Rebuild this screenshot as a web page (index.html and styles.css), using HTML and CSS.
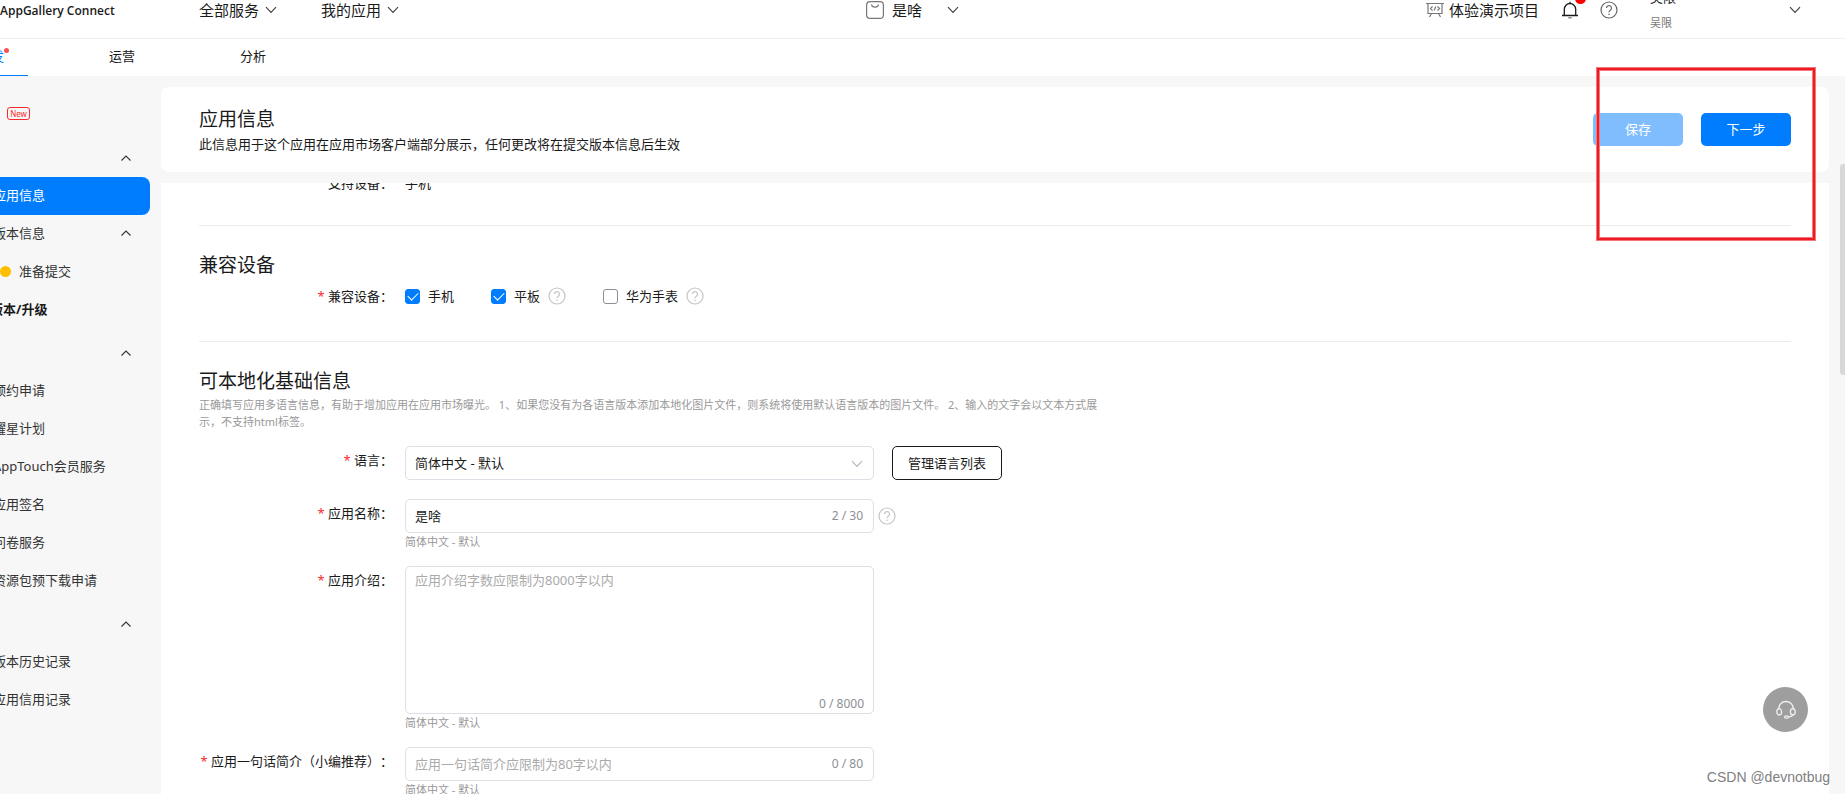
FILE: index.html
```html
<!DOCTYPE html>
<html lang="zh-CN">
<head>
<meta charset="utf-8">
<title>AppGallery Connect</title>
<link rel="stylesheet" href="styles.css">
</head>
<body>
<svg class="defs" aria-hidden="true">
  <symbol id="down" viewBox="0 0 12 8"><path d="M1 1.2 6 6.4 11 1.2" fill="none" stroke="currentColor" stroke-width="1.2"/></symbol>
  <symbol id="up" viewBox="0 0 12 8"><path d="M1.5 6.5 6 2 10.500 6.500" fill="none" stroke="currentColor" stroke-width="1.100"/></symbol>
  <symbol id="help" viewBox="0 0 18 18"><g fill="none" stroke="currentColor" stroke-width="1.2"><circle cx="9" cy="9" r="8"/><path d="M6.500 7.100a2.500 2.500 0 1 1 4.100 1.900c-1 .8-1.600 1.200-1.600 2.300"/></g><circle cx="9" cy="13.200" r=".8" fill="currentColor"/></symbol>
</svg>

<header class="topbar">
  <a class="brand" href="#">AppGallery Connect</a>
  <nav class="topnav">
    <button type="button" class="menu">全部服务<svg class="chev"><use href="#down"/></svg></button>
    <button type="button" class="menu">我的应用<svg class="chev"><use href="#down"/></svg></button>
  </nav>
  <button type="button" class="menu app-menu">
    <svg class="app-icon" viewBox="0 0 18 18" fill="none" stroke="#777" stroke-width="1.200"><rect x=".6" y=".6" width="16.800" height="16.800" rx="3.500"/><path d="M5.500 3.500c.4 3.600 6.600 3.600 7 0"/></svg>
    <span>是啥</span><svg class="chev"><use href="#down"/></svg>
  </button>
  <div class="tools">
    <a class="demo" href="#">
      <svg viewBox="0 0 18 16" fill="none" stroke="#777" stroke-width="1.200"><path d="M0 1.500h18M2 1.500v10h14v-10M5.500 11.500 3.500 15M12.500 11.500l2 3.500M6.500 4.500 4.500 6.500l2 2M11.500 4.500l2 2-2 2M9.800 4.500 8.200 8.500"/></svg>体验演示项目</a>
    <button type="button" class="bell" aria-label="通知">
      <svg viewBox="0 0 18 18" fill="none" stroke="#1a1a1a" stroke-width="1.300"><path d="M1 14.500h16M3.300 14.500V8.200a5.700 5.700 0 0 1 11.400 0v6.300M9 2.500V.8"/><path d="M7.300 16.800h3.400" stroke="#777"/></svg>
      <span class="bell-badge"></span>
    </button>
    <button type="button" class="help dark" aria-label="帮助"><svg><use href="#help"/></svg></button>
    <button type="button" class="user">
      <span class="user-names"><span class="user-name">吴限</span><span class="user-sub">吴限</span></span>
      <svg class="chev"><use href="#down"/></svg>
    </button>
  </div>
</header>

<nav class="tabs">
  <a class="tab current" href="#"><span class="tab-text">开发<i class="tab-dot"></i></span></a>
  <a class="tab" href="#">运营</a>
  <a class="tab" href="#">分析</a>
</nav>

<div class="body">
  <aside class="side">
    <div class="side-top"><span class="new">New</span></div>
    <button type="button" class="group" aria-label="应用上架"><svg class="chev-up"><use href="#up"/></svg></button>
    <a class="item active" href="#">应用信息</a>
    <a class="item" href="#">版本信息<svg class="chev-up"><use href="#up"/></svg></a>
    <a class="item sub" href="#"><i class="dot"></i>准备提交</a>
    <a class="item strong" href="#">新版本/升级</a>
    <button type="button" class="group" aria-label="应用服务"><svg class="chev-up"><use href="#up"/></svg></button>
    <a class="item" href="#">预约申请</a>
    <a class="item" href="#">耀星计划</a>
    <a class="item" href="#">AppTouch会员服务</a>
    <a class="item" href="#">应用签名</a>
    <a class="item" href="#">问卷服务</a>
    <a class="item" href="#">资源包预下载申请</a>
    <button type="button" class="group" aria-label="记录"><svg class="chev-up"><use href="#up"/></svg></button>
    <a class="item" href="#">版本历史记录</a>
    <a class="item" href="#">应用信用记录</a>
  </aside>

  <main class="main">
    <section class="panel page-head">
      <div>
        <h1>应用信息</h1>
        <p class="lead">此信息用于这个应用在应用市场客户端部分展示，任何更改将在提交版本信息后生效</p>
      </div>
      <div class="actions">
        <button type="button" class="btn" disabled>保存</button>
        <button type="button" class="btn">下一步</button>
      </div>
    </section>

    <form class="panel form">
      <div class="row clipped"><span class="label">支持设备：</span><span>手机</span></div>

      <section class="block">
        <h2>兼容设备</h2>
        <div class="row devices">
          <span class="label required">兼容设备：</span>
          <div class="options">
            <label class="option"><input type="checkbox" checked>手机</label>
            <div class="option"><label class="option"><input type="checkbox" checked>平板</label><span class="help"><svg><use href="#help"/></svg></span></div>
            <div class="option"><label class="option"><input type="checkbox">华为手表</label><span class="help"><svg><use href="#help"/></svg></span></div>
          </div>
        </div>
      </section>

      <section class="block">
        <h2>可本地化基础信息</h2>
        <p class="note">正确填写应用多语言信息，有助于增加应用在应用市场曝光。 1、如果您没有为各语言版本添加本地化图片文件，则系统将使用默认语言版本的图片文件。 2、输入的文字会以文本方式展示，不支持html标签。</p>
        <div class="row lang">
          <label class="label required" for="lang">语言：</label>
          <div class="line">
            <div class="field">
              <select id="lang" class="input"><option>简体中文 - 默认</option></select>
              <svg class="chev select-chev"><use href="#down"/></svg>
            </div>
            <button type="button" class="outline">管理语言列表</button>
          </div>
        </div>
        <div class="row">
          <label class="label required" for="name">应用名称：</label>
          <div>
            <div class="line near">
              <div class="field"><input id="name" class="input" type="text" value="是啥"><span class="count">2 / 30</span></div>
              <span class="help"><svg><use href="#help"/></svg></span>
            </div>
            <p class="tip">简体中文 - 默认</p>
          </div>
        </div>
        <div class="row">
          <label class="label required" for="intro">应用介绍：</label>
          <div>
            <div class="field"><textarea id="intro" class="input" placeholder="应用介绍字数应限制为8000字以内"></textarea><span class="count low">0 / 8000</span></div>
            <p class="tip">简体中文 - 默认</p>
          </div>
        </div>
        <div class="row">
          <label class="label required" for="brief">应用一句话简介（小编推荐）：</label>
          <div>
            <div class="field"><input id="brief" class="input" type="text" placeholder="应用一句话简介应限制为80字以内"><span class="count">0 / 80</span></div>
            <p class="tip">简体中文 - 默认</p>
          </div>
        </div>
      </section>
    </form>
  </main>
</div>

<div class="thumb"></div>
<div class="marker"></div>
<button type="button" class="service" aria-label="在线客服">
  <svg viewBox="0 0 20 20" fill="none" stroke="#eee" stroke-width="1.300"><path d="M2.500 9.500C2.500-1.200 17.500-1.200 17.500 9.500M17.500 14c-.6 2-2.300 2.700-5 2.800"/><ellipse cx="3.200" cy="11.800" rx="2.400" ry="3.200"/><ellipse cx="16.800" cy="11.800" rx="2.400" ry="3.200"/><ellipse cx="10.500" cy="17" rx="2" ry="1.200"/></svg>
</button>
<span class="credit">CSDN @devnotbug</span>
</body>
</html>
```

FILE: styles.css
```css
* { box-sizing: border-box; }

body {
  margin: 0;
  height: 100vh;
  overflow: hidden;
  display: flex;
  flex-direction: column;
  position: relative;
  background: #f7f7f7;
  color: #1a1a1a;
  font: 13px/20px "Noto Sans", "Noto Sans CJK SC", sans-serif;
  text-spacing-trim: space-all;
}

a { color: inherit; text-decoration: none; }
h1, h2, p { margin: 0; font-weight: 400; }
svg { display: block; flex: none; }
button {
  padding: 0;
  border: 0;
  background: none;
  color: inherit;
  font: inherit;
  cursor: pointer;
}

.defs { position: absolute; width: 0; height: 0; }
.chev { width: 12px; height: 8px; color: #444; }
.chev-up { width: 12px; height: 8px; color: #333; }
.help { display: block; color: #c4c4c4; }
.help svg { width: 18px; height: 18px; }
.help.dark { color: #666; }

/* top bar */
.topbar {
  flex: none;
  display: flex;
  align-items: center;
  height: 57px;
  margin-top: -18px;
  padding-right: 44px;
  background: #fff;
  border-bottom: 1px solid #f0f0f0;
  font-size: 15px;
}
.brand { width: 199px; padding: 2px 0 0; font-family: "Open Sans", sans-serif; font-size: 12px; font-weight: 600; }
.topnav { display: flex; gap: 44px; }
.menu { display: flex; align-items: center; gap: 6px; }
.app-menu { margin: 0 auto; gap: 8px; }
.app-menu .chev { margin-left: 17px; }
.app-icon { width: 18px; height: 18px; }
.tools { display: flex; align-items: center; }
.demo { display: flex; align-items: center; gap: 5px; margin-right: 22px; }
.demo svg { width: 18px; height: 16px; }
.bell { position: relative; margin-right: 21px; }
.bell svg { width: 18px; height: 18px; }
.bell-badge {
  position: absolute;
  top: -8px;
  right: -7px;
  width: 11px;
  height: 11px;
  border-radius: 50%;
  background: #f00;
}
.user { display: flex; align-items: center; gap: 113px; margin-left: 32px; text-align: left; }
.user-names { display: flex; flex-direction: column; line-height: 25px; }
.user-name { font-size: 13px; }
.user-sub { font-size: 11px; color: #777; }

/* tabs */
.tabs {
  flex: none;
  display: flex;
  gap: 57px;
  height: 37px;
  margin-left: -46px;
  background: #fff;
}
.tab { width: 74px; padding-top: 7px; text-align: center; }
.tab.current { color: #007dff; border-bottom: 1px solid #007dff; }
.tab-text { position: relative; }
.tab-dot {
  position: absolute;
  top: 1px;
  right: -5px;
  width: 5px;
  height: 5px;
  border-radius: 50%;
  background: #fa5151;
}

/* layout */
.body { flex: 1; min-height: 0; display: flex; gap: 11px; padding-right: 16px; }
.main { flex: 1; min-width: 0; display: flex; flex-direction: column; gap: 11px; padding-top: 11px; }

/* side menu */
.side { flex: none; width: 174px; margin-left: -24px; color: #333; }
.side-top { height: 63px; padding: 31px 0 0 31px; }
.new {
  display: block;
  width: 23px;
  height: 13px;
  border: 1px solid #fa2a2d;
  border-radius: 3px;
  color: #fa2a2d;
  font-size: 8px;
  line-height: 11px;
  text-align: center;
}
.group, .item { display: flex; align-items: center; width: 100%; height: 38px; padding: 0 18px 2px 17px; }
.group { justify-content: flex-end; margin-top: 5px; padding-bottom: 0; }
.side-top + .group { margin-top: 0; }
.item .chev-up { margin-left: auto; }
.item.active { background: #007dff; color: #fff; border-radius: 8px; }
.item.sub { gap: 8px; padding-left: 24px; }
.item.strong { padding-left: 1px; font-weight: 700; color: #1a1a1a; }
.dot { width: 11px; height: 11px; border-radius: 50%; background: #ffbf00; }

/* panels */
.panel { background: #fff; padding: 0 38px; }
.page-head {
  flex: none;
  display: flex;
  align-items: center;
  justify-content: space-between;
  height: 85px;
  border-radius: 8px;
}
h1, h2 { font-size: 19px; line-height: 26px; }
.lead { margin-top: 2px; }
.actions { display: flex; gap: 18px; }
.btn { width: 90px; height: 33px; padding-bottom: 1px; border-radius: 5px; background: #007dff; color: #fff; }
.btn:disabled { background: #80bdff; }

/* form */
.form { flex: 1; min-height: 0; overflow: hidden; }
.row { display: grid; grid-template-columns: 194px 1fr; column-gap: 12px; margin-top: 16px; }
.row.clipped { margin: -10px 0 32px; }
.row.devices { margin-top: 8px; }
.row.lang { margin-bottom: 19px; }
.label { text-align: right; white-space: nowrap; }
.block .label { padding-top: 4px; }
.block .devices .label { padding-top: 0; }
.required::before { content: "* "; color: #fa2a2d; }
.block { padding: 26px 0 35px; border-top: 1px solid #ebebeb; }
.options { display: flex; gap: 37px; }
.option { display: flex; align-items: center; gap: 8px; }
input[type="checkbox"] {
  appearance: none;
  width: 15px;
  height: 15px;
  margin: 0;
  border: 1px solid #8c8f99;
  border-radius: 3px;
  background: #fff;
}
input[type="checkbox"]:checked { display: grid; place-items: center; border-color: #007dff; background: #007dff; }
input[type="checkbox"]:checked::before {
  content: "";
  width: 9px;
  height: 5px;
  margin-bottom: 3px;
  border: solid #fff;
  border-width: 0 0 1px 1px;
  rotate: -45deg;
}
.note { max-width: 908px; margin-top: 2px; color: #999; font-size: 11px; line-height: 17px; }
.tip { color: #999; font-size: 11px; line-height: 17px; }
.line { display: flex; align-items: center; gap: 18px; }
.line.near { gap: 4px; }
.field { position: relative; width: 469px; }
.input {
  display: block;
  width: 100%;
  height: 34px;
  padding: 0 9px 1px;
  border: 1px solid #dcdfe6;
  border-radius: 5px;
  background: #fff;
  color: #1a1a1a;
  font: inherit;
  appearance: none;
  resize: none;
  outline: 0;
}
textarea.input { height: 148px; padding-top: 3px; }
.input::placeholder { color: #aaa; }
.select-chev { position: absolute; right: 11px; top: 14px; color: #b4b8bf; }
.count { position: absolute; right: 11px; top: 7px; color: #8c8f94; font-size: 12px; }
.count.low { top: auto; bottom: 0; right: 10px; }
.outline { height: 34px; padding: 0 15px; border: 1px solid #1a1a1a; border-radius: 5px; }

/* overlays */
.thumb {
  position: absolute;
  top: 164px;
  right: 0;
  width: 5px;
  height: 211px;
  border-radius: 3px 0 0 3px;
  background: #d8d8d8;
}
.marker {
  position: absolute;
  top: 68px;
  right: 30px;
  width: 218px;
  height: 172px;
  border: 2px solid #ed1c24;
  box-shadow: 0 0 0 1px #f4777c, inset 0 0 0 1px #f4777c;
}
.service {
  position: absolute;
  right: 37px;
  bottom: 62px;
  width: 45px;
  height: 45px;
  display: grid;
  place-items: center;
  border-radius: 50%;
  background: #9e9e9e;
}
.service svg { width: 20px; height: 20px; }
.credit {
  position: absolute;
  right: 15px;
  bottom: 7px;
  color: #808080;
  font-family: "Liberation Sans", sans-serif;
  font-size: 14px;
}
```
